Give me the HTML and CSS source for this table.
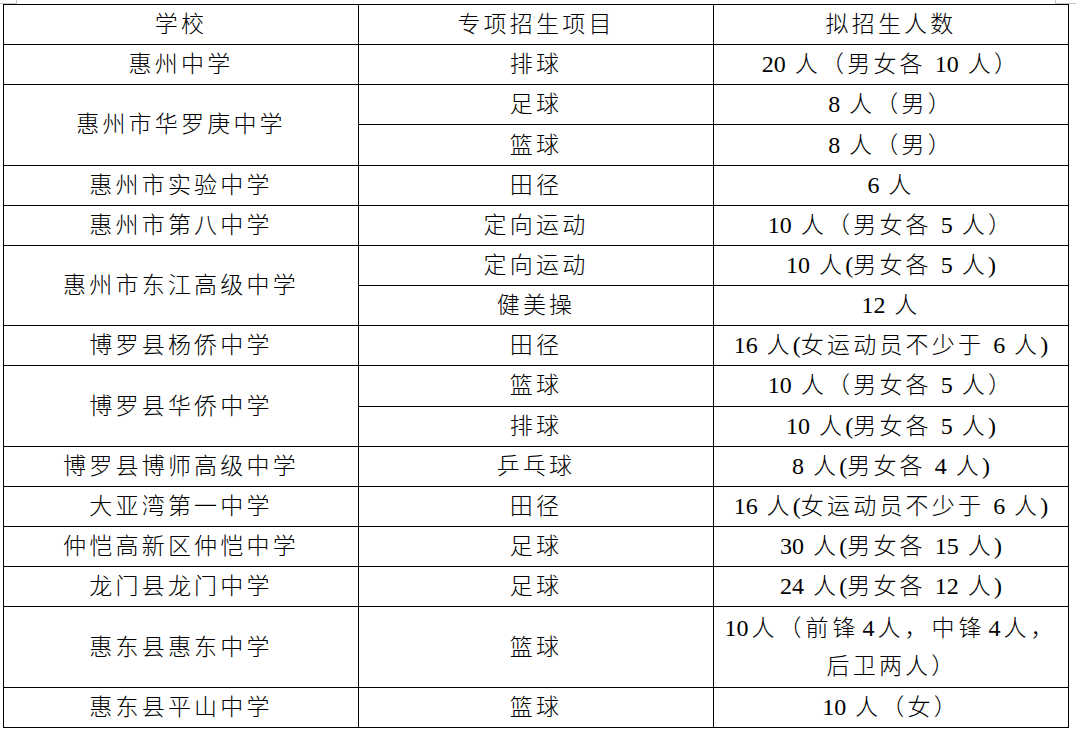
FILE: index.html
```html
<!DOCTYPE html>
<html lang="zh-CN">
<head>
<meta charset="utf-8">
<title>专项招生项目</title>
<link rel="stylesheet" href="styles.css">
</head>
<body>
<div class="mark mark-left"></div>
<div class="mark mark-right"></div>
<table class="sheet">
  <colgroup><col class="c"><col class="c"><col class="c"></colgroup>
  <tr><td>学校</td><td>专项招生项目</td><td>拟招生人数</td></tr>
  <tr><td>惠州中学</td><td>排球</td><td><span class="n">20</span> 人（男女各 <span class="n">10</span> 人）</td></tr>
  <tr><td rowspan="2">惠州市华罗庚中学</td><td>足球</td><td><span class="n">8</span> 人（男）</td></tr>
  <tr><td>篮球</td><td><span class="n">8</span> 人（男）</td></tr>
  <tr><td>惠州市实验中学</td><td>田径</td><td><span class="n">6</span> 人</td></tr>
  <tr><td>惠州市第八中学</td><td>定向运动</td><td><span class="n">10</span> 人（男女各 <span class="n">5</span> 人）</td></tr>
  <tr><td rowspan="2">惠州市东江高级中学</td><td>定向运动</td><td><span class="n">10</span> 人<span class="n">(</span>男女各 <span class="n">5</span> 人<span class="n">)</span></td></tr>
  <tr><td>健美操</td><td><span class="n">12</span> 人</td></tr>
  <tr><td>博罗县杨侨中学</td><td>田径</td><td><span class="n">16</span> 人<span class="n">(</span>女运动员不少于 <span class="n">6</span> 人<span class="n">)</span></td></tr>
  <tr><td rowspan="2">博罗县华侨中学</td><td>篮球</td><td><span class="n">10</span> 人（男女各 <span class="n">5</span> 人）</td></tr>
  <tr><td>排球</td><td><span class="n">10</span> 人<span class="n">(</span>男女各 <span class="n">5</span> 人<span class="n">)</span></td></tr>
  <tr><td>博罗县博师高级中学</td><td>乒乓球</td><td><span class="n">8</span> 人<span class="n">(</span>男女各 <span class="n">4</span> 人<span class="n">)</span></td></tr>
  <tr><td>大亚湾第一中学</td><td>田径</td><td><span class="n">16</span> 人<span class="n">(</span>女运动员不少于 <span class="n">6</span> 人<span class="n">)</span></td></tr>
  <tr><td>仲恺高新区仲恺中学</td><td>足球</td><td><span class="n">30</span> 人<span class="n">(</span>男女各 <span class="n">15</span> 人<span class="n">)</span></td></tr>
  <tr><td>龙门县龙门中学</td><td>足球</td><td><span class="n">24</span> 人<span class="n">(</span>男女各 <span class="n">12</span> 人<span class="n">)</span></td></tr>
  <tr class="tall"><td>惠东县惠东中学</td><td>篮球</td><td class="multi"><span class="first"><span class="n">10</span>人（前锋<span class="n mid">4</span>人，中锋<span class="n mid">4</span>人，</span><span class="last">后卫两人）</span></td></tr>
  <tr><td>惠东县平山中学</td><td>篮球</td><td><span class="n">10</span> 人（女）</td></tr>
</table>
</body>
</html>
```
FILE: styles.css
```css
html, body {
  margin: 0;
  padding: 0;
  background: #ffffff;
}

body {
  padding: 4px 0 0 3px;
  position: relative;
}

.mark {
  position: absolute;
  top: 0;
  width: 16px;
  height: 3px;
  border-bottom: 1px solid #c4c4c4;
}

.mark-left {
  left: 0;
  border-right: 1px solid #c4c4c4;
}

.mark-right {
  left: 1055px;
  width: 21px;
  border-left: 1px solid #c4c4c4;
}

.sheet {
  border-collapse: collapse;
  table-layout: fixed;
  width: 1066px;
  height: 724px;
  font-family: "Liberation Serif", "Noto Sans CJK SC", serif;
  font-weight: 300;
  font-size: 23px;
  color: #000000;
}

.sheet .c {
  width: 355px;
}

.sheet tr {
  height: 40.17px;
}

.sheet tr.tall {
  height: 80.34px;
}

.sheet td {
  border: 1px solid #000000;
  padding: 0;
  text-align: center;
  vertical-align: middle;
  line-height: 39px;
  letter-spacing: 3.2px;
  white-space: nowrap;
}

.sheet .n {
  font-size: 24px;
  letter-spacing: 0;
}

.sheet td.multi {
  line-height: 38px;
}

.multi .first {
  display: block;
  letter-spacing: 4px;
}

.multi .first .n {
  margin-right: 3px;
}

.multi .first .mid {
  margin-left: 3px;
}

.multi .last {
  display: block;
  padding-left: 2px;
}
```
